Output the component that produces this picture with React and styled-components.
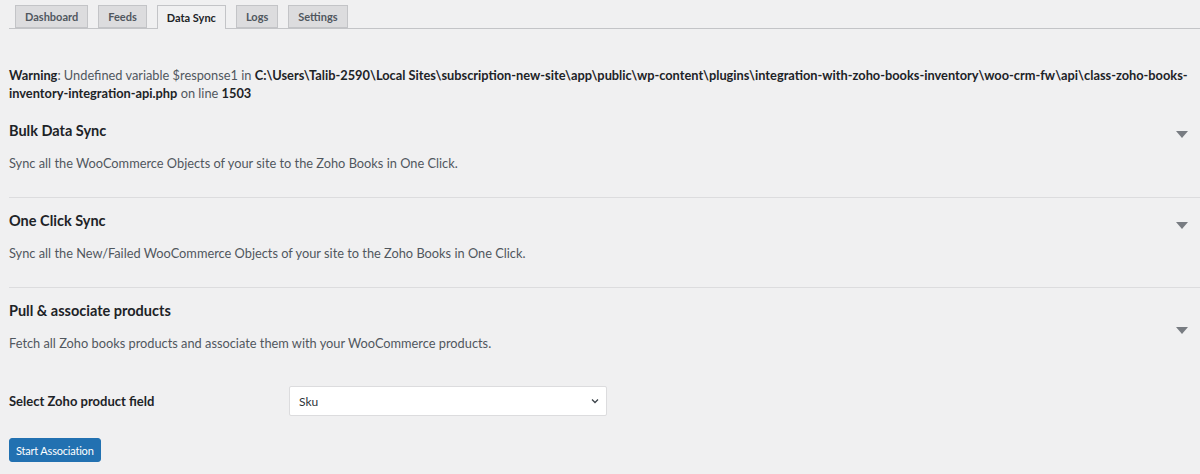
import React from "react";
import styled, { createGlobalStyle } from "styled-components";

const Global = createGlobalStyle`
  html, body { margin: 0; padding: 0; background: #f0f0f1; }
  body { font-family: "Segoe UI", Lato, "Noto Sans", sans-serif; color: #3c434a; }
`;

const Page = styled.div`
  width: 1200px;
  height: 474px;
  overflow: hidden;
  padding-left: 9px;
  box-sizing: border-box;
`;

const TabBar = styled.nav`
  display: flex;
  gap: 10px;
  padding: 5px 0 0 6px;
  border-bottom: 1px solid #c3c4c7;
  height: 23px;
`;

const Tab = styled.a`
  display: flex;
  align-items: center;
  padding: 0 9px;
  height: ${(p) => (p.$active ? "24px" : "23px")};
  box-sizing: border-box;
  border: 1px solid #c3c4c7;
  border-bottom: ${(p) => (p.$active ? "none" : "1px solid #c3c4c7")};
  background: ${(p) => (p.$active ? "#f0f0f1" : "#dcdcde")};
  color: ${(p) => (p.$active ? "#1d2327" : "#50575e")};
  font-size: 11px;
  font-weight: 700;
  text-decoration: none;
  white-space: nowrap;
`;

const Warning = styled.p`
  margin: 37px 0 0;
  font-size: 12.8px;
  line-height: 18px;
  color: #50575e;
  white-space: nowrap;
`;

const Strong = styled.b`
  font-weight: 700;
  color: #1d2327;
  letter-spacing: 0;
`;

const Section = styled.section`
  position: relative;
  padding: 13px 0 ${(p) => (p.$last ? "0" : "25px")};
  margin-top: ${(p) => (p.$first ? "6px" : "0")};
  border-bottom: ${(p) => (p.$last ? "none" : "1px solid #dcdcde")};
`;

const Title = styled.h3`
  margin: 0;
  font-size: 14.5px;
  line-height: 20px;
  font-weight: 700;
  color: #1d2327;
`;

const Desc = styled.p`
  margin: 13px 0 0;
  font-size: 12.8px;
  line-height: 18px;
  color: #50575e;
`;

const Toggle = styled.span`
  position: absolute;
  right: 12px;
  top: ${(p) => p.$top}px;
  width: 0;
  height: 0;
  border-left: 6px solid transparent;
  border-right: 6px solid transparent;
  border-top: 7px solid #787c82;
  transform: translateY(-3px);
`;

const FormRow = styled.div`
  display: grid;
  grid-template-columns: 280px 318px;
  align-items: center;
  margin-top: 34px;
`;

const Label = styled.label`
  font-size: 13px;
  font-weight: 700;
  color: #1d2327;
`;

const SelectBox = styled.div`
  position: relative;
  height: 30px;
  box-sizing: border-box;
  background: #fff;
  border: 1px solid #dcdcde;
  border-radius: 2px;
  display: flex;
  align-items: center;
  padding: 0 9px;
  font-size: 12px;
  color: #2c3338;
`;

const Chevron = styled.svg`
  position: absolute;
  right: 6px;
  top: 50%;
  transform: translateY(-50%);
`;

const Button = styled.button`
  margin-top: 22px;
  height: 24px;
  padding: 0 6px;
  background: #2271b1;
  border: 1px solid #2271b1;
  border-radius: 3px;
  color: #fff;
  font-family: inherit;
  font-size: 11px;
  letter-spacing: -0.2px;
  cursor: pointer;
`;

export default function App() {
  return (
    <>
      <Global />
      <Page>
        <TabBar>
          <Tab>Dashboard</Tab>
          <Tab>Feeds</Tab>
          <Tab $active>Data Sync</Tab>
          <Tab>Logs</Tab>
          <Tab>Settings</Tab>
        </TabBar>
        <Warning>
          <Strong>Warning</Strong>: Undefined variable $response1 in{" "}
          <Strong>
            C:\Users\Talib-2590\Local Sites\subscription-new-site\app\public\wp-content\plugins\integration-with-zoho-books-inventory\woo-crm-fw\api\class-zoho-books-
            <br />
            inventory-integration-api.php
          </Strong>{" "}
          on line <Strong>1503</Strong>
        </Warning>
        <Section $first>
          <Title>Bulk Data Sync</Title>
          <Desc>Sync all the WooCommerce Objects of your site to the Zoho Books in One Click.</Desc>
          <Toggle $top={26} />
        </Section>
        <Section>
          <Title>One Click Sync</Title>
          <Desc>Sync all the New/Failed WooCommerce Objects of your site to the Zoho Books in One Click.</Desc>
          <Toggle $top={27} />
        </Section>
        <Section $last>
          <Title>Pull &amp; associate products</Title>
          <Desc>Fetch all Zoho books products and associate them with your WooCommerce products.</Desc>
          <Toggle $top={42} />
          <FormRow>
            <Label>Select Zoho product field</Label>
            <SelectBox>
              Sku
              <Chevron width="10" height="10" viewBox="0 0 10 10">
                <path d="M2 3.5 L5 6.5 L8 3.5" fill="none" stroke="#3c434a" strokeWidth="1.3" />
              </Chevron>
            </SelectBox>
          </FormRow>
          <Button>Start Association</Button>
        </Section>
      </Page>
    </>
  );
}
